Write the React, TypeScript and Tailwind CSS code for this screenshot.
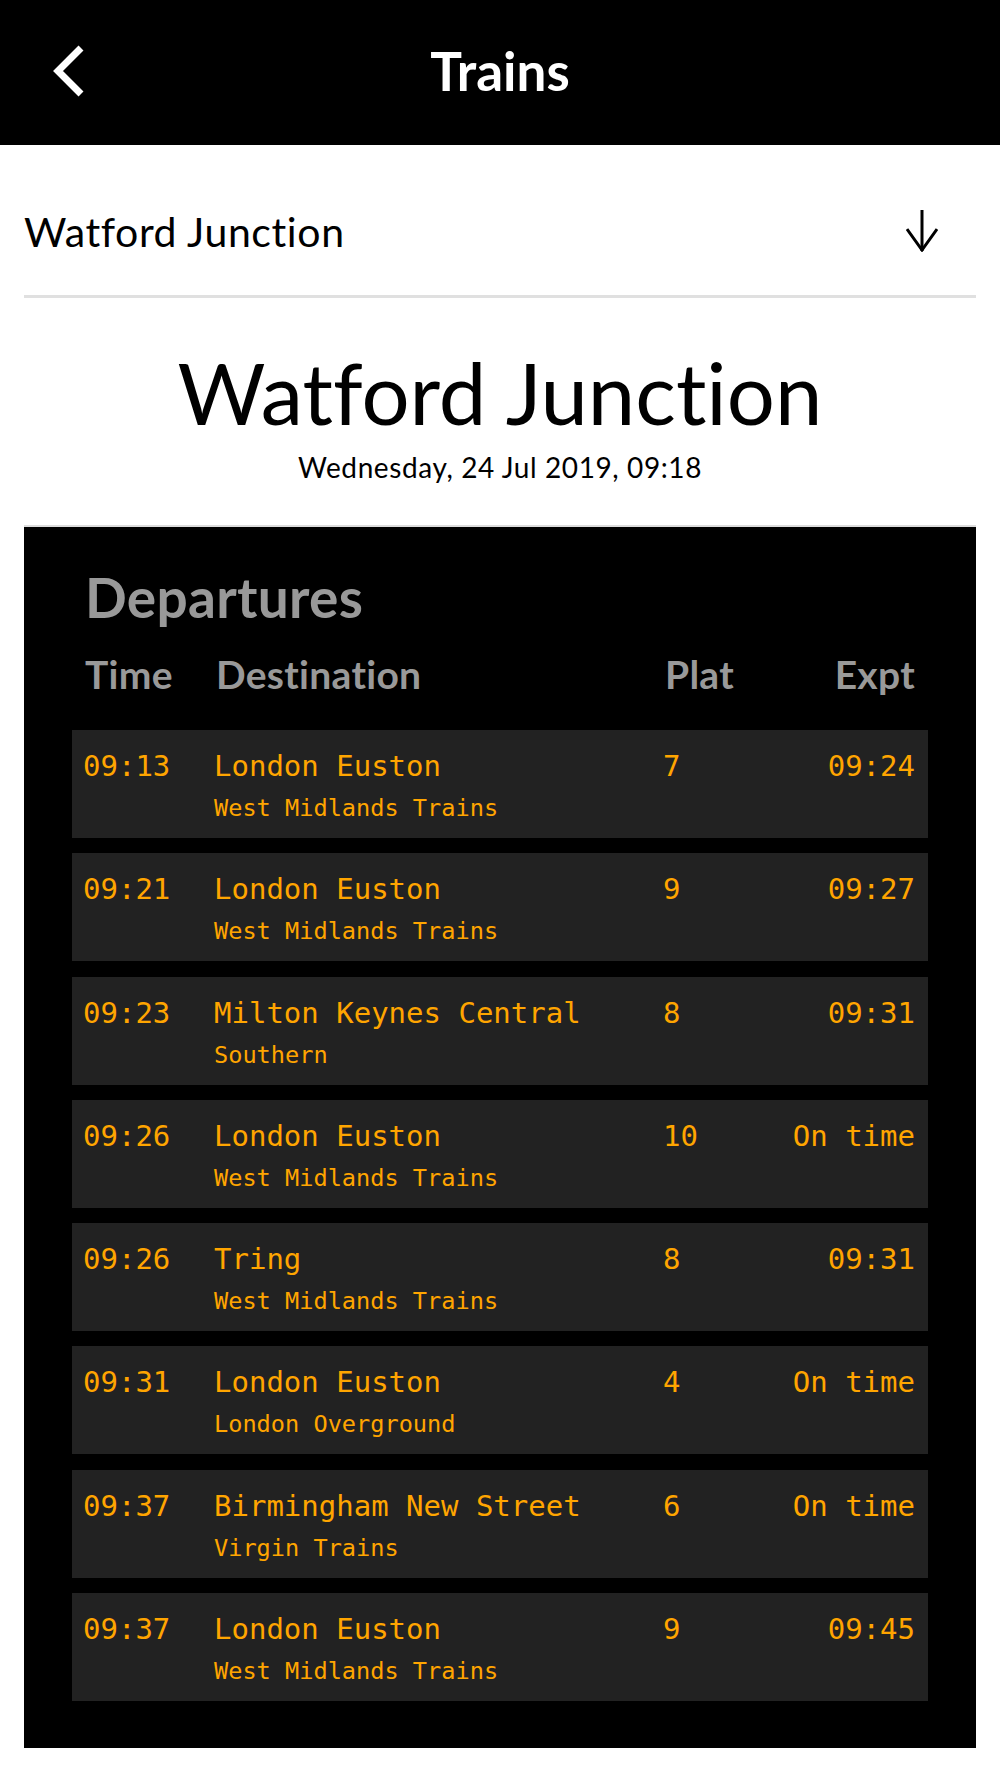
import React from 'react'

interface Departure {
  time: string
  destination: string
  operator: string
  platform: string
  expected: string
}

const departures: Departure[] = [
  { time: '09:13', destination: 'London Euston', operator: 'West Midlands Trains', platform: '7', expected: '09:24' },
  { time: '09:21', destination: 'London Euston', operator: 'West Midlands Trains', platform: '9', expected: '09:27' },
  { time: '09:23', destination: 'Milton Keynes Central', operator: 'Southern', platform: '8', expected: '09:31' },
  { time: '09:26', destination: 'London Euston', operator: 'West Midlands Trains', platform: '10', expected: 'On time' },
  { time: '09:26', destination: 'Tring', operator: 'West Midlands Trains', platform: '8', expected: '09:31' },
  { time: '09:31', destination: 'London Euston', operator: 'London Overground', platform: '4', expected: 'On time' },
  { time: '09:37', destination: 'Birmingham New Street', operator: 'Virgin Trains', platform: '6', expected: 'On time' },
  { time: '09:37', destination: 'London Euston', operator: 'West Midlands Trains', platform: '9', expected: '09:45' },
]

const sans = "font-['Lato','Liberation_Sans',sans-serif] [font-variant-ligatures:none]"
const mono = "font-['DejaVu_Sans_Mono','Liberation_Mono',monospace]"

function BackChevron() {
  return (
    <svg width="42" height="56" viewBox="0 0 42 56" fill="none">
      <polyline points="33,5 10,28 33,51" stroke="white" strokeWidth="7" strokeLinejoin="miter" strokeLinecap="butt" />
    </svg>
  )
}

function DownArrow() {
  return (
    <svg width="32" height="42" viewBox="0 0 32 42" fill="none">
      <line x1="16" y1="0" x2="16" y2="41" stroke="black" strokeWidth="3" />
      <polyline points="1,19 16,40 31,19" stroke="black" strokeWidth="3" strokeLinejoin="miter" />
    </svg>
  )
}

function DepartureRow({ d }: { d: Departure }) {
  return (
    <div className={`h-[108px] bg-[#222222] pl-[11px] pr-[13px] pt-[20px] text-[#ffa500] ${mono}`}>
      <div className="grid grid-cols-[131px_449px_1fr_auto] text-[29px] leading-[32px]">
        <span>{d.time}</span>
        <span>{d.destination}</span>
        <span>{d.platform}</span>
        <span className="text-right">{d.expected}</span>
      </div>
      <div className="grid grid-cols-[131px_1fr] mt-[13px] text-[23.6px] leading-[26px]">
        <span />
        <span>{d.operator}</span>
      </div>
    </div>
  )
}

export default function App() {
  return (
    <div className={`w-[1000px] min-h-[1778px] bg-white ${sans}`}>
      {/* Top bar */}
      <div className="h-[145px] bg-black grid grid-cols-[1fr_auto_1fr] items-center pb-[4px]">
        <div className="pl-[48px] flex items-center">
          <BackChevron />
        </div>
        <h1 className="text-white text-[53px] leading-[53px] font-bold">Trains</h1>
        <div />
      </div>

      {/* Station picker */}
      <div className="mx-[24px] h-[153px] border-b-[3px] border-[#e0e0e0] flex items-center justify-between pt-[22px] pr-[38px]">
        <span className="text-[41px] leading-[41px] tracking-[0.6px] text-black">Watford Junction</span>
        <DownArrow />
      </div>

      {/* Station title */}
      <div className="text-center text-black">
        <h2 className="mt-[52px] text-[85px] leading-[85px]">Watford Junction</h2>
        <p className="mt-[18px] text-[28px] leading-[28px] tracking-[0.6px]">Wednesday, 24 Jul 2019, 09:18</p>
      </div>

      {/* Departures board */}
      <div className="mx-[24px] mt-[44px] bg-black border-t-2 border-[#dddddd] px-[48px] pt-[43px] pb-[47px]">
        <h3 className="pl-[13px] text-[55px] leading-[55px] font-bold tracking-[0.3px] text-[#999999]">Departures</h3>
        <div className="mt-[30px] mb-[36px] pl-[13px] pr-[13px] grid grid-cols-[131px_449px_1fr_auto] text-[39px] leading-[39px] font-bold tracking-[0.3px] text-[#999999]">
          <span>Time</span>
          <span>Destination</span>
          <span>Plat</span>
          <span className="text-right">Expt</span>
        </div>
        <div className="flex flex-col gap-[15.3px]">
          {departures.map((d, i) => (
            <DepartureRow key={i} d={d} />
          ))}
        </div>
      </div>
    </div>
  )
}
